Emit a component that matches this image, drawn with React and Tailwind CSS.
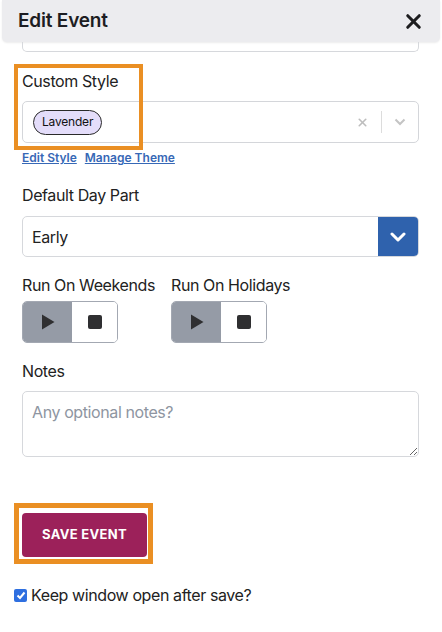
import { X } from "lucide-react";

function Label({ children, className = "" }) {
  return <div className={`text-[16px] leading-6 tracking-[-0.4px] text-[#222] ${className}`}>{children}</div>;
}

function PlayStop() {
  return (
    <div className="flex h-[42px] w-[96px] overflow-hidden rounded-[5px] border border-[#a3a8b2]">
      <div className="flex w-[49px] items-center justify-center bg-[#959ba6]">
        <svg width="14" height="16" viewBox="0 0 14 16">
          <path d="M1 0.5 L13.5 8 L1 15.5 Z" fill="#2f2f31" />
        </svg>
      </div>
      <div className="flex flex-1 items-center justify-center bg-white">
        <div className="h-[14px] w-[14px] rounded-[2px] bg-[#2f2f31]" />
      </div>
    </div>
  );
}

export default function App() {
  return (
    <div
      className="relative h-[632px] w-[442px] overflow-hidden bg-white"
      style={{ fontFamily: "Inter, 'Noto Sans', sans-serif" }}
    >
      {/* header */}
      <div className="mx-[2px] flex h-[42px] items-center justify-between rounded-b-[5px] bg-[#ececef] pl-[16px] pr-[15px] shadow-[0_1px_2px_rgba(0,0,0,0.08)]">
        <div className="text-[19px] font-semibold tracking-[-0.2px] text-[#1d1d22]">Edit Event</div>
        <X size={23} strokeWidth={3.2} className="text-[#1d1d1f]" />
      </div>

      <div className="pl-[22px] pr-[23px]">
        {/* cut off input above */}
        <div className="h-[10px] rounded-b-[5px] border-x border-b border-[#d6d8dc]" />

        <Label className="mt-[17px]">Custom Style</Label>
        <div className="mt-[8px] flex h-[42px] items-center rounded-[5px] border border-[#d4d6da] pl-[10px]">
          <span className="flex h-[25px] items-center rounded-full border border-[#2a2a2a] bg-[#e4ddfa] px-[8px] text-[12px] tracking-[-0.2px] text-[#111]">
            Lavender
          </span>
          <div className="ml-auto flex items-center">
            <X size={13} strokeWidth={3} className="mr-[12px] text-[#bdbdbd]" />
            <div className="h-[22px] w-px bg-[#dcdcdc]" />
            <svg width="12" height="8" viewBox="0 0 12 8" className="mx-[12px]">
              <path d="M1.5 1.5 L6 6 L10.5 1.5" stroke="#c4c4c4" strokeWidth="2" fill="none" />
            </svg>
          </div>
        </div>
        <div className="mt-[7px] flex gap-[8px] text-[12px] font-semibold leading-4 text-[#3768b6] underline">
          <span>Edit Style</span>
          <span>Manage Theme</span>
        </div>

        <Label className="mt-[17px]">Default Day Part</Label>
        <div className="mt-[9px] flex h-[41px] overflow-hidden rounded-[5px] border border-[#d6d8dc]">
          <div className="flex flex-1 items-center pl-[9px] text-[16px] tracking-[-0.4px] text-[#222]">Early</div>
          <div className="flex w-[40px] items-center justify-center bg-[#2f62ad]">
            <svg width="16" height="10" viewBox="0 0 16 10">
              <path d="M2 2 L8 8 L14 2" stroke="white" strokeWidth="3" fill="none" strokeLinecap="round" strokeLinejoin="round" />
            </svg>
          </div>
        </div>

        <div className="mt-[16px] flex">
          <div className="w-[149px]">
            <Label>Run On Weekends</Label>
            <div className="mt-[4px]">
              <PlayStop />
            </div>
          </div>
          <div>
            <Label>Run On Holidays</Label>
            <div className="mt-[4px]">
              <PlayStop />
            </div>
          </div>
        </div>

        <Label className="mt-[16px]">Notes</Label>
        <textarea
          placeholder="Any optional notes?"
          className="mt-[8px] block h-[66px] w-full resize-y rounded-[5px] border border-[#d6d8dc] px-[9px] py-[8px] text-[16px] tracking-[-0.4px] text-[#222] outline-none placeholder:text-[#8e95a1]"
        />

        <button className="mt-[56px] flex h-[44px] w-[125px] items-center justify-center rounded-[4px] bg-[#9c215a] text-[13px] font-bold tracking-[0.3px] text-white">
          SAVE EVENT
        </button>

        <div className="-ml-[8px] mt-[26px] flex items-center gap-[4px]">
          <span className="flex h-[13px] w-[13px] items-center justify-center rounded-[2px] bg-[#2e6fe0]">
            <svg width="10" height="9" viewBox="0 0 10 9">
              <path d="M1.5 4.5 L4 7 L8.5 1.5" stroke="white" strokeWidth="2" fill="none" />
            </svg>
          </span>
          <span className="text-[16px] leading-6 tracking-[-0.4px] text-[#222]">Keep window open after save?</span>
        </div>
      </div>

      {/* annotation highlights */}
      <div className="pointer-events-none absolute left-[14px] top-[64px] h-[86px] w-[129px] border-[4px] border-[#ea8f23]" />
      <div className="pointer-events-none absolute left-[14px] top-[503px] h-[61px] w-[139px] border-[5px] border-[#ea8f23]" />
    </div>
  );
}
